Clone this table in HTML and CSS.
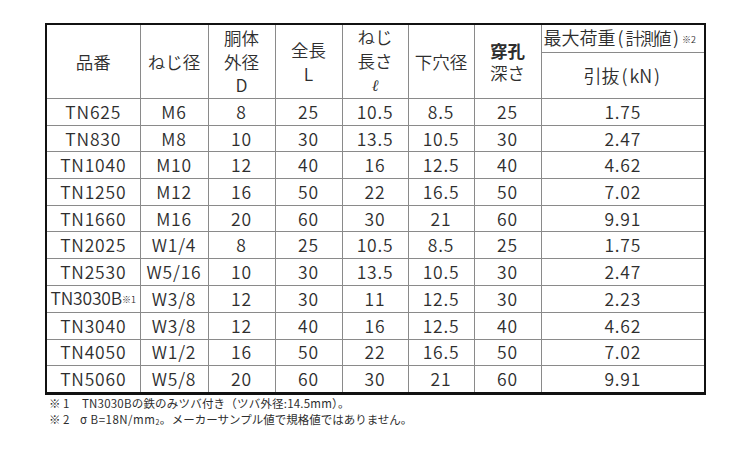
FILE: index.html
```html
<!DOCTYPE html>
<html lang="ja">
<head>
<meta charset="utf-8">
<link rel="stylesheet" href="styles.css">
</head>
<body>
<div class="wrap">
<table class="spec">
  <colgroup>
    <col class="c1"><col class="c2"><col class="c3"><col class="c4"><col class="c5"><col class="c6"><col class="c7"><col class="c8">
  </colgroup>
  <thead>
    <tr class="h1">
      <th rowspan="2">品番</th>
      <th rowspan="2">ねじ径</th>
      <th rowspan="2" class="ml">胴体<br>外径<br>D</th>
      <th rowspan="2" class="ml">全長<br>L</th>
      <th rowspan="2" class="ml">ねじ<br>長さ<br><span class="ell">ℓ</span></th>
      <th rowspan="2">下穴径</th>
      <th rowspan="2" class="ml2"><b>穿孔</b><br>深さ</th>
      <th class="load">最大荷重<span class="par">(</span><span class="cond">計測値</span><span class="par">)</span><span class="note">※2</span></th>
    </tr>
    <tr class="h2">
      <th class="pull">引抜<span class="par">(</span>kN<span class="par">)</span></th>
    </tr>
  </thead>
  <tbody>
    <tr><td>TN625</td><td>M6</td><td>8</td><td>25</td><td>10.5</td><td>8.5</td><td>25</td><td>1.75</td></tr>
    <tr><td>TN830</td><td>M8</td><td>10</td><td>30</td><td>13.5</td><td>10.5</td><td>30</td><td>2.47</td></tr>
    <tr><td>TN1040</td><td>M10</td><td>12</td><td>40</td><td>16</td><td>12.5</td><td>40</td><td>4.62</td></tr>
    <tr><td>TN1250</td><td>M12</td><td>16</td><td>50</td><td>22</td><td>16.5</td><td>50</td><td>7.02</td></tr>
    <tr><td>TN1660</td><td>M16</td><td>20</td><td>60</td><td>30</td><td>21</td><td>60</td><td>9.91</td></tr>
    <tr><td>TN2025</td><td>W1/4</td><td>8</td><td>25</td><td>10.5</td><td>8.5</td><td>25</td><td>1.75</td></tr>
    <tr><td>TN2530</td><td>W5/16</td><td>10</td><td>30</td><td>13.5</td><td>10.5</td><td>30</td><td>2.47</td></tr>
    <tr><td class="tight">TN3030B<span class="note">※1</span></td><td>W3/8</td><td>12</td><td>30</td><td>11</td><td>12.5</td><td>30</td><td>2.23</td></tr>
    <tr><td>TN3040</td><td>W3/8</td><td>12</td><td>40</td><td>16</td><td>12.5</td><td>40</td><td>4.62</td></tr>
    <tr><td>TN4050</td><td>W1/2</td><td>16</td><td>50</td><td>22</td><td>16.5</td><td>50</td><td>7.02</td></tr>
    <tr><td>TN5060</td><td>W5/8</td><td>20</td><td>60</td><td>30</td><td>21</td><td>60</td><td>9.91</td></tr>
  </tbody>
</table>
<div class="notes">
  <p><span class="mark">※ 1</span><span class="n1">TN3030Bの鉄のみツバ付き（ツバ外径:14.5mm）。</span></p>
  <p><span class="mark">※ 2</span><span class="sig">σ B=18N/mm<sub>2</sub>。</span>メーカーサンプル値で規格値ではありません。</p>
</div>
</div>
</body>
</html>
```
FILE: styles.css
```css
html, body {
  margin: 0;
  padding: 0;
  background: #fff;
}
body {
  font-family: "Noto Sans CJK JP", "Noto Sans", sans-serif;
  color: #2e2e2e;
}
.wrap {
  padding: 23px 0 0 45px;
}
.spec {
  border-collapse: collapse;
  border: 2px solid #111;
  border-bottom-width: 3px;
  table-layout: fixed;
  width: 659px;
}
.c1 { width: 94px; }
.c2 { width: 68px; }
.c3 { width: 67px; }
.c4 { width: 67px; }
.c5 { width: 66px; }
.c6 { width: 66px; }
.c7 { width: 67px; }
.c8 { width: 164px; }
.spec th, .spec td {
  border: 1px solid #8a8a8a;
  padding: 0;
  text-align: center;
  font-weight: 350;
  vertical-align: middle;
}
.spec th {
  font-size: 17.5px;
  line-height: 23.5px;
}
.spec .h1 { height: 26px; }
.spec .h2 { height: 46px; }
.spec th.ml2 { line-height: 22px; }
.spec th.ml2 b { font-weight: 700; }
.spec th.load {
  font-size: 18px;
  text-align: left;
  padding-left: 2px;
  line-height: 24px;
  white-space: nowrap;
}
.spec th.pull { font-size: 18px; }
.par { margin: 0 2px; }
.cond { letter-spacing: -2.5px; font-size: 17px; margin-right: 2px; }
.ell { font-style: italic; font-family: "DejaVu Serif", serif; font-size: 16px; }
.spec td {
  font-size: 17.5px;
  height: 25.7px;
  line-height: 24px;
  letter-spacing: 0.8px;
}
.spec td.tight { letter-spacing: -0.2px; }
.note {
  font-size: 9px;
  vertical-align: 2px;
  letter-spacing: 0;
}
.spec th.load .note { margin-left: 1px; }
.notes {
  font-size: 11.5px;
  line-height: 16px;
  padding: 0 0 0 4px;
}
.notes p { margin: 0; }
.mark {
  display: inline-block;
  width: 33px;
}
.n1 { letter-spacing: 0.2px; }
.sig { letter-spacing: 0.5px; margin-left: -2px; }
.notes sub {
  font-size: 7px;
  vertical-align: -1px;
}
```
